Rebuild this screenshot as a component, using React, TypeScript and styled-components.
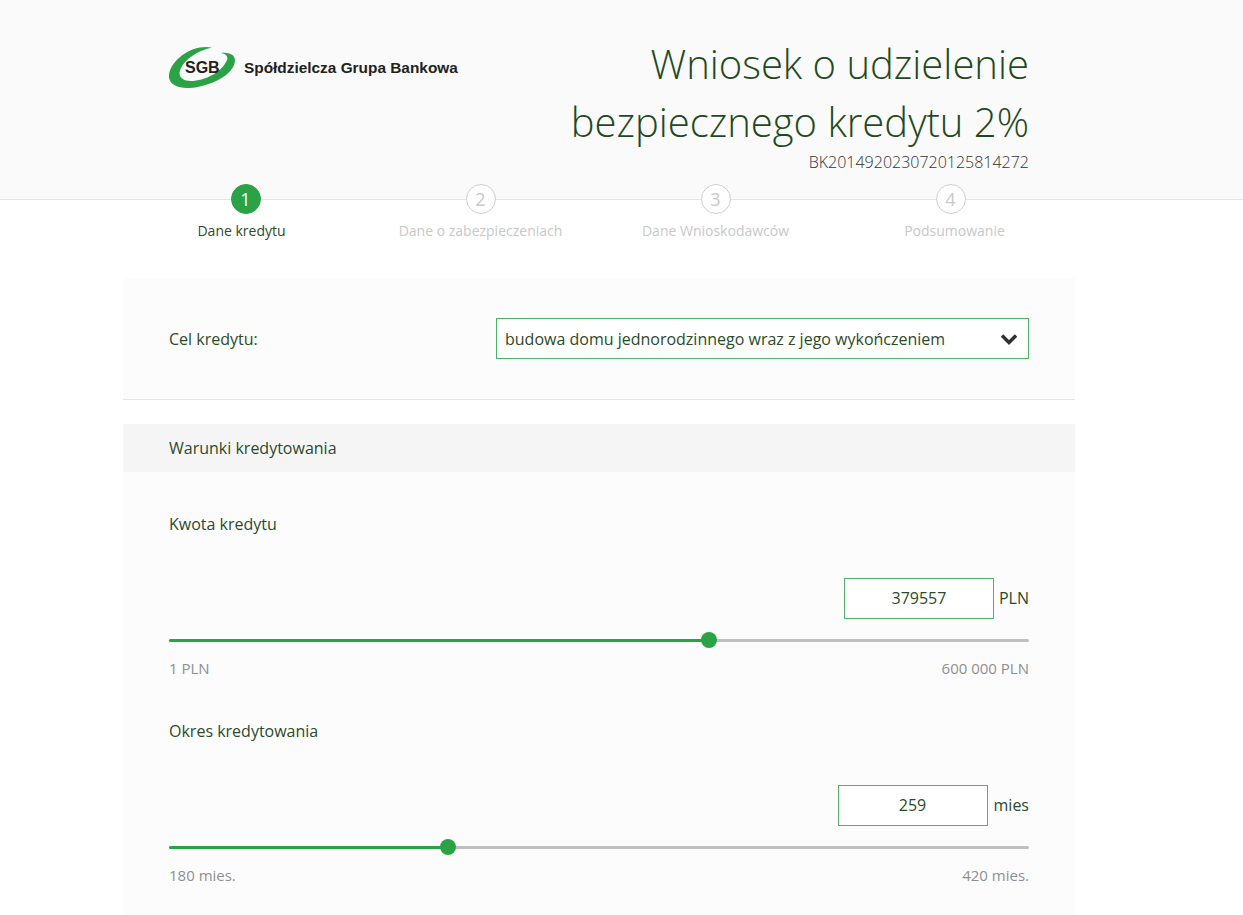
import React from 'react';
import styled, { createGlobalStyle } from 'styled-components';

const GREEN = '#2ba246';
const TEXT = '#2c4a2c';

const steps = [
  { no: 1, label: 'Dane kredytu', shift: -4, active: true },
  { no: 2, label: 'Dane o zabezpieczeniach', shift: 0, active: false },
  { no: 3, label: 'Dane Wnioskodawców', shift: 0, active: false },
  { no: 4, label: 'Podsumowanie', shift: 4, active: false },
];

const App = () => {
  return (
    <>
      <GlobalStyle />
      <Header>
        <HeaderInner>
          <Logo>
            <svg width="67" height="44" viewBox="0 0 67 44">
              <path
                d="M43 2.5 C24 -1 2 14 0 30 C-1 39 8 43.5 20 43 C40 42 66 30 66 15 C66 10 60 7 52 8 C58 9 60 12 57 17 C52 27 36 36 22 36 C13 36 9 31 11 26 C14 15 28 6 43 2.5 Z"
                fill={GREEN}
              />
            </svg>
            <LogoMark>SGB</LogoMark>
            <LogoName>Spółdzielcza Grupa Bankowa</LogoName>
          </Logo>
          <TitleBlock>
            <Title>
              Wniosek o udzielenie
              <br />
              bezpiecznego kredytu 2%
            </Title>
            <RefNumber>BK2014920230720125814272</RefNumber>
          </TitleBlock>
        </HeaderInner>
      </Header>

      <Steps>
        {steps.map((s) => (
          <Step key={s.no}>
            <Circle $active={s.active}>{s.no}</Circle>
            <StepLabel $active={s.active} $shift={s.shift}>
              {s.label}
            </StepLabel>
          </Step>
        ))}
      </Steps>

      <Main>
        <PurposeRow>
          <FieldName>Cel kredytu:</FieldName>
          <SelectBox>
            budowa domu jednorodzinnego wraz z jego wykończeniem
            <svg width="18" height="12" viewBox="0 0 18 12">
              <path d="M2 2.5 L9 9.5 L16 2.5" fill="none" stroke="#2f2f2f" strokeWidth="3.4" />
            </svg>
          </SelectBox>
        </PurposeRow>

        <SectionTitle>Warunki kredytowania</SectionTitle>

        <Panel>
          <SliderField
            label="Kwota kredytu"
            value="379557"
            unit="PLN"
            unitGap={5}
            position={62.8}
            min="1 PLN"
            max="600 000 PLN"
          />
          <SliderField
            label="Okres kredytowania"
            value="259"
            unit="mies"
            unitGap={6}
            position={32.4}
            min="180 mies."
            max="420 mies."
          />
        </Panel>
      </Main>
    </>
  );
};

type SliderFieldProps = {
  label: string;
  value: string;
  unit: string;
  unitGap: number;
  position: number;
  min: string;
  max: string;
};

const SliderField = ({ label, value, unit, unitGap, position, min, max }: SliderFieldProps) => (
  <Field>
    <FieldName>{label}</FieldName>
    <ValueRow $gap={unitGap}>
      <ValueBox>{value}</ValueBox>
      <Unit>{unit}</Unit>
    </ValueRow>
    <Track>
      <TrackFill style={{ width: `${position}%` }}>
        <Thumb />
      </TrackFill>
    </Track>
    <Range>
      <span>{min}</span>
      <span>{max}</span>
    </Range>
  </Field>
);

export default App;

const GlobalStyle = createGlobalStyle`
  html, body {
    margin: 0;
    padding: 0;
    background: #fff;
    overflow: hidden;
  }
  body {
    font-family: 'Open Sans', sans-serif;
    font-size: 16px;
    color: ${TEXT};
  }
`;

const Header = styled.header`
  height: 199px;
  background: #fafafa;
  border-bottom: 1px solid #e4e4e4;
`;

const HeaderInner = styled.div`
  display: flex;
  justify-content: space-between;
  align-items: flex-start;
  width: 860px;
  margin-left: 169px;
`;

const Logo = styled.div`
  position: relative;
  display: flex;
  align-items: center;
  margin-top: 45px;
`;

const LogoMark = styled.span`
  position: absolute;
  left: 16px;
  top: 14px;
  font: bold 16px 'Liberation Sans', Arial, sans-serif;
  color: #222;
`;

const LogoName = styled.span`
  margin-left: 8px;
  margin-top: 2px;
  font: bold 15.4px 'Liberation Sans', Arial, sans-serif;
  color: #222;
`;

const TitleBlock = styled.div`
  text-align: right;
  margin-top: 35px;
`;

const Title = styled.h1`
  margin: 0;
  font-size: 40px;
  font-weight: 300;
  line-height: 58px;
  color: #1f4a1f;
`;

const RefNumber = styled.div`
  font-size: 16px;
  font-weight: 300;
  line-height: 22px;
  color: #333;
`;

const Steps = styled.div`
  display: grid;
  grid-template-columns: repeat(4, 235px);
  margin: -16px 0 0 128px;
`;

const Step = styled.div`
  display: flex;
  flex-direction: column;
  align-items: center;
`;

const Circle = styled.div<{ $active: boolean }>`
  box-sizing: border-box;
  width: 30px;
  height: 30px;
  border-radius: 50%;
  display: flex;
  align-items: center;
  justify-content: center;
  font-size: 18px;
  background: ${(p) => (p.$active ? GREEN : '#fff')};
  border: 1px solid ${(p) => (p.$active ? GREEN : '#cfcfcf')};
  color: ${(p) => (p.$active ? '#fff' : '#c8c8c8')};
`;

const StepLabel = styled.div<{ $active: boolean; $shift: number }>`
  margin-top: 7px;
  font-size: 14px;
  line-height: 20px;
  white-space: nowrap;
  transform: translateX(${(p) => p.$shift}px);
  color: ${(p) => (p.$active ? TEXT : '#c8c8c8')};
`;

const Main = styled.main`
  width: 952px;
  margin: 37px 0 0 123px;
`;

const PurposeRow = styled.div`
  display: flex;
  align-items: center;
  justify-content: space-between;
  height: 121px;
  padding: 0 46px;
  background: #fcfcfc;
  border-bottom: 1px solid #e4e4e4;
`;

const FieldName = styled.div`
  line-height: 22px;
`;

const SelectBox = styled.div`
  box-sizing: border-box;
  display: flex;
  align-items: center;
  justify-content: space-between;
  width: 533px;
  height: 41px;
  padding: 0 10px 0 8px;
  background: #fff;
  border: 1px solid #4cb464;
`;

const SectionTitle = styled.h2`
  margin: 24px 0 0;
  padding: 0 46px;
  font-size: 16px;
  font-weight: 400;
  line-height: 48px;
  background: #f5f5f5;
`;

const Panel = styled.section`
  padding: 41px 46px 60px;
  background: #fcfcfc;
`;

const Field = styled.div`
  & + & {
    margin-top: 42px;
  }
`;

const ValueRow = styled.div<{ $gap: number }>`
  display: flex;
  align-items: center;
  justify-content: flex-end;
  gap: ${(p) => p.$gap}px;
  margin-top: 43px;
`;

const ValueBox = styled.div`
  box-sizing: border-box;
  width: 150px;
  height: 41px;
  line-height: 39px;
  text-align: center;
  background: #fff;
  border: 1px solid #4cb464;
`;

const Unit = styled.span`
  margin-bottom: 2px;
`;

const Track = styled.div`
  height: 3px;
  margin-top: 20px;
  border-radius: 2px;
  background: #c0c0c0;
`;

const TrackFill = styled.div`
  position: relative;
  height: 100%;
  border-radius: 2px;
  background: ${GREEN};
`;

const Thumb = styled.div`
  position: absolute;
  right: -8px;
  top: -7px;
  width: 16px;
  height: 16px;
  border-radius: 50%;
  background: ${GREEN};
`;

const Range = styled.div`
  display: flex;
  justify-content: space-between;
  margin-top: 16px;
  font-size: 15px;
  line-height: 20px;
  color: #8f8f8f;
`;
